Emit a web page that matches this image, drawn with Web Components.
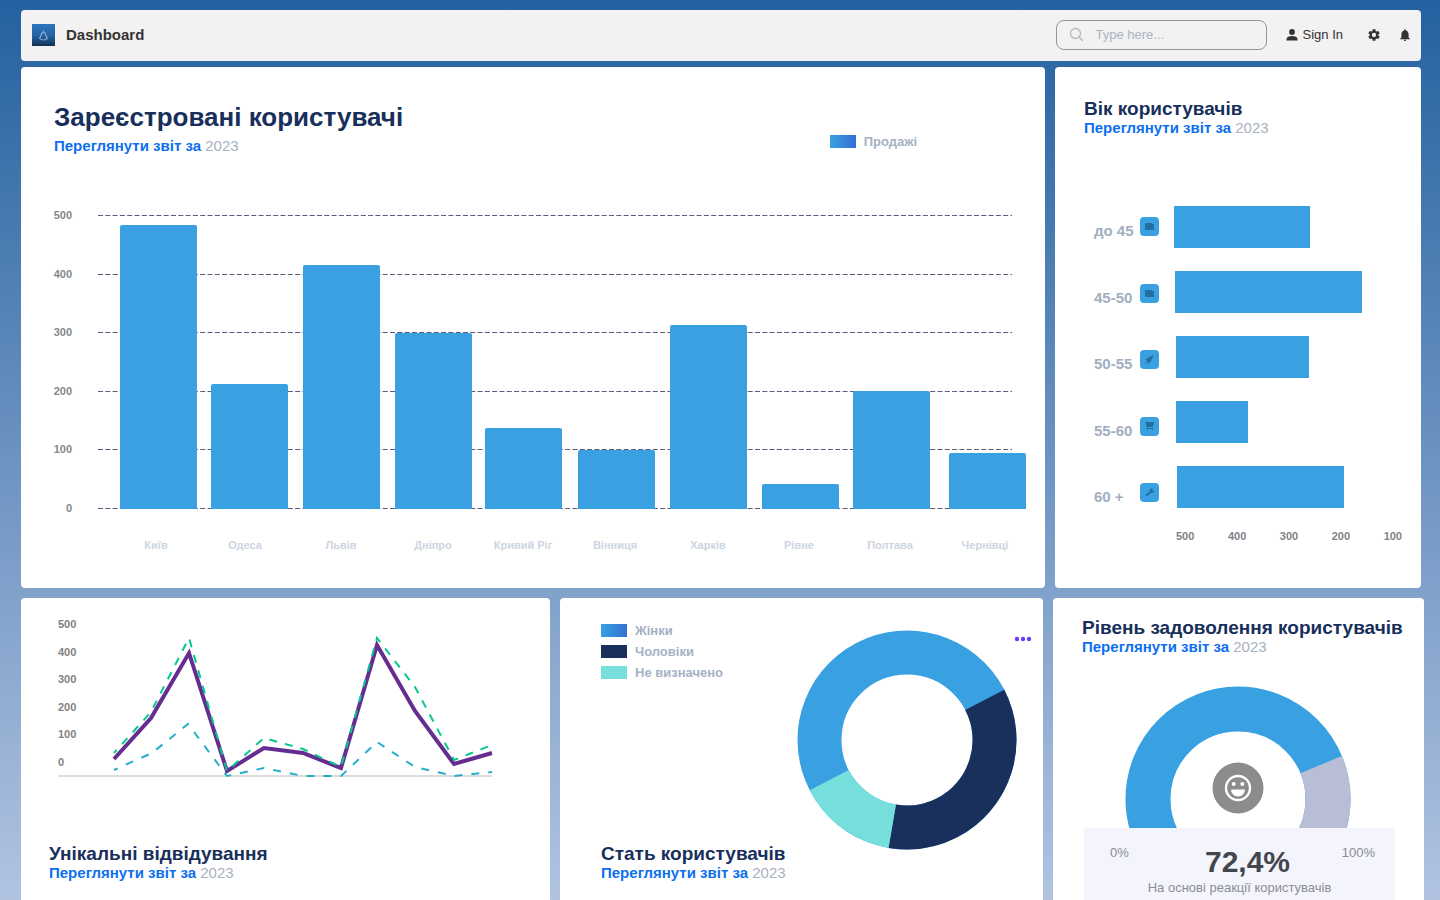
<!DOCTYPE html>
<html lang="uk">
<head>
<meta charset="utf-8">
<title>Dashboard</title>
<style>
  html { height: 100%; }
  body {
    margin: 0; min-height: 100%; display: flex; flex-direction: column;
    font-family: "Liberation Sans", Arial, sans-serif; color: #2d3748;
    background: linear-gradient(#2461a0, #b1c3e1) fixed;
  }
</style>
</head>
<body>
<dash-app></dash-app>

<script>
const define = (name, html, setup) => {
  const template = document.createElement('template');
  template.innerHTML = html;
  customElements.define(name, class extends HTMLElement {
    constructor() {
      super();
      this.attachShadow({ mode: 'open' }).append(template.content.cloneNode(true));
    }
    connectedCallback() { if (setup) setup(this.shadowRoot, this); }
  });
};

define('dash-header', `
<style>
  :host { display: flex; align-items: center; height: 51px; box-sizing: border-box; padding: 0 11px 2px; background: #f3f1f1; border-radius: 4px; color: #333; }
  .logo { width: 23px; height: 22px; margin-right: 11px; }
  h1 { margin: 0; font-size: 15px; line-height: 20px; flex: 1; }
  .search { display: flex; align-items: center; gap: 12px; box-sizing: border-box; width: 211px; height: 30px; padding: 0 12px; border: 1px solid #929896; border-radius: 8px; margin-right: 19px; }
  .search svg { flex: none; width: 15px; height: 15px; }
  input { min-width: 0; flex: 1; border: 0; padding: 0; outline: 0; background: none; font: 13px/20px "Liberation Sans", Arial, sans-serif; color: #333; }
  input::placeholder { color: #a9b6c8; opacity: 1; }
  a { display: flex; align-items: center; gap: 5px; color: inherit; font-size: 13px; line-height: 20px; text-decoration: none; margin-right: 25px; }
  button { border: 0; padding: 0; background: none; display: block; color: inherit; }
  button + button { margin-left: 20px; }
  button svg, a svg { display: block; }
</style>
<svg class="logo" viewBox="0 0 24 24" preserveAspectRatio="none" aria-hidden="true">
  <defs><linearGradient id="sky" x1="0" y1="0" x2="0" y2="1"><stop offset="0" stop-color="#2d76be"/><stop offset=".55" stop-color="#2461a0"/><stop offset="1" stop-color="#0f3050"/></linearGradient></defs>
  <path fill="url(#sky)" d="M0 0h24v24H0z"/>
  <path d="M12 7v2M10.500 9.500 8 16q4 3 8 0l-2.500-6.500z" fill="none" stroke="#8fb3d8" stroke-width="1.200"/>
</svg>
<h1>Dashboard</h1>
<label class="search">
  <svg viewBox="0 0 15 15" fill="none" stroke="#b5b9bc" stroke-width="1.300" stroke-linecap="round" aria-hidden="true"><circle cx="6.500" cy="6.500" r="5"/><path d="m10.300 10.300 3.200 3.200"/></svg>
  <input type="text" placeholder="Type here..." aria-label="Type here">
</label>
<a href="#sign-in"><svg width="12" height="12" viewBox="0 0 12 12" fill="currentColor" aria-hidden="true"><circle cx="6" cy="3" r="2.900"/><path d="M.500 11.500V10C.500 8 3 7 6 7s5.500 1 5.500 3v1.500z"/></svg>Sign In</a>
<button aria-label="Settings"><svg width="12" height="12" viewBox="2 2 20 20" fill="currentColor"><path d="M19.140 12.940a7 7 0 0 0 0-1.880l2.030-1.580a.5.5 0 0 0 .12-.61l-1.920-3.320a.5.5 0 0 0-.59-.22l-2.390.96a7 7 0 0 0-1.620-.94l-.36-2.540a.5.5 0 0 0-.48-.41h-3.840a.5.5 0 0 0-.47.410l-.36 2.540a7 7 0 0 0-1.620.940l-2.390-.96a.5.5 0 0 0-.59.220L2.740 8.870a.5.5 0 0 0 .12.610l2.030 1.580a7 7 0 0 0 0 1.880l-2.030 1.580a.5.5 0 0 0-.12.610l1.920 3.320c.12.220.37.290.59.220l2.390-.96a7 7 0 0 0 1.620.940l.36 2.540c.05.240.24.410.48.410h3.840c.24 0 .44-.17.470-.41l.36-2.540a7 7 0 0 0 1.620-.94l2.390.960c.22.080.47 0 .59-.22l1.920-3.320a.5.5 0 0 0-.12-.61zM12 15.600a3.600 3.600 0 1 1 0-7.200 3.600 3.600 0 0 1 0 7.200z"/></svg></button>
<button aria-label="Notifications"><svg width="10" height="12" viewBox="4 2 16 20" fill="currentColor"><path d="M12 22a2 2 0 0 0 2-2h-4a2 2 0 0 0 2 2zm6-6v-5c0-3.070-1.640-5.640-4.500-6.320V4a1.500 1.500 0 0 0-3 0v.680C7.630 5.360 6 7.920 6 11v5l-2 2v1h16v-1z"/></svg></button>
`);

define('dash-card', `
<style>
  :host { display: flex; flex-direction: column; box-sizing: border-box; min-width: 0; background: #fff; border-radius: 4px; }
</style>
<slot></slot>
`);

define('report-title', `
<style>
  :host { display: block; white-space: nowrap; }
  h2 { margin: 0; color: #182f5b; font-size: var(--title-size, 19px); line-height: var(--title-line, 20px); }
  p { margin: 0; font-size: 15px; line-height: 18px; color: #a8b2c1; }
  a { color: #0c6ff0; font-weight: bold; text-decoration: none; }
</style>
<h2><slot></slot></h2>
<p><a href="#report">Переглянути звіт за</a> 2023</p>
`);

define('legend-item', `
<style>
  :host { display: flex; align-items: center; gap: 8px; font-size: 13px; line-height: 21px; font-weight: bold; color: #a5b1c5; white-space: nowrap; }
  i { width: 26px; height: 13px; background: var(--swatch, linear-gradient(90deg, #38a1e1, #346fd2)); }
</style>
<i></i><slot></slot>
`);

define('city-chart', `
<style>
  :host { display: block; }
  svg { display: block; width: 100%; height: 350px; overflow: visible; font-size: 11px; font-weight: bold; }
  .tick { fill: #858789; text-anchor: end; }
  .city { fill: #ccd5e1; text-anchor: middle; }
  line { stroke: #5f5c7a; stroke-dasharray: 5 2.300; }
  rect { fill: #39a1e1; }
</style>
<svg role="img" aria-label="Зареєстровані користувачі"></svg>
`, root => {
  const span = 971, pc = v => (v / span * 100) + '%';
  const cities = [['Київ', 66, 284, 102], ['Одеса', 157, 125, 191], ['Львів', 249, 244, 287], ['Дніпро', 341, 176, 379], ['Кривий Ріг', 431, 81, 469], ['Вінниця', 524, 59, 561], ['Харків', 616, 184, 654], ['Рівне', 708, 25, 745], ['Полтава', 799, 118, 836], ['Чернівці', 895, 56, 931]];
  let out = '';
  [500, 400, 300, 200, 100, 0].forEach((t, i) => {
    const y = Math.round(10 + i * 58.6);
    out += `<text class="tick" x="18" y="${y + 4}">${t}</text><line x1="${pc(44)}" x2="${pc(958)}" y1="${y + .5}" y2="${y + .5}"/>`;
  });
  for (const [name, x, h, c] of cities)
    out += `<rect x="${pc(x)}" y="${304 - h}" width="${pc(77)}" height="${h}" rx="2"/><rect x="${pc(x)}" y="${304 - h + 4}" width="${pc(77)}" height="${h - 4}"/><text class="city" x="${pc(c)}" y="344">${name}</text>`;
  root.querySelector('svg').innerHTML = out;
});

define('age-chart', `
<style>
  :host { display: block; }
  .rows { display: flex; gap: 15px; height: 302px; }
  ul { list-style: none; margin: 0; padding: 0; display: flex; flex-direction: column; justify-content: space-between; }
  .names { width: 65px; padding: 11px 0 5px; flex: none; }
  .names li { display: flex; justify-content: space-between; height: 20px; font-size: 15px; line-height: 28px; font-weight: bold; color: #a2aec1; white-space: nowrap; }
  .names svg { width: 19px; height: 19px; }
  .bars { flex: 1; }
  .bars li { height: 42px; background: #39a1e1; }
  .axis { flex-direction: row; padding: 20px 0 0 82px; font-size: 11px; line-height: 16px; font-weight: bold; color: #808285; }
</style>
<div class="rows"><ul class="names"></ul><ul class="bars"></ul></div>
<ul class="axis"><li>500</li><li>400</li><li>300</li><li>200</li><li>100</li></ul>
`, root => {
  const wallet = '<path d="M5 6h7v1h2v6H5z"/>';
  const data = [
    ['до 45', 0, 136, wallet], ['45-50', 1, 187, wallet],
    ['50-55', 2, 133, '<path d="M14 5 9 7 5 10l2 1 1 3 3-3z"/><path d="m6 12-1 2 2-1z"/>'],
    ['55-60', 2, 72, '<path d="M5 5h9l-1 5H7l1 1h5v2h-1v-1H8v1H7l-1-6z"/>'],
    ['60 +', 3, 167, '<path d="m5 12 4-3 1-3 3-1-1 2 1 1 1-1v2l-3 1-4 3z"/>']];
  root.querySelector('.names').innerHTML = data.map(d => `<li>${d[0]}<svg viewBox="0 0 19 19" aria-hidden="true"><rect width="19" height="19" rx="4" fill="#39a1e1"/><g fill="#246f9f">${d[3]}</g></svg></li>`).join('');
  root.querySelector('.bars').innerHTML = data.map(d => `<li style="margin-left:${d[1]}px;width:${d[2] / 228 * 100}%"></li>`).join('');
});

define('visits-chart', `
<style>
  :host { display: flex; height: 160px; }
  ol { list-style: none; margin: 0; padding: 0; width: 19px; flex: none; font-size: 11px; font-weight: bold; color: #808285; line-height: 16px; display: flex; flex-direction: column; height: 154px; justify-content: space-between; }
  svg { display: block; margin-left: -19px; width: 100%; min-width: 0; height: 166px; overflow: visible; }
  polyline { fill: none; }
</style>
<ol><li>500</li><li>400</li><li>300</li><li>200</li><li>100</li><li>0</li></ol>
<svg viewBox="58 616 434 166" preserveAspectRatio="none" role="img" aria-label="Унікальні відвідування">
  <path d="M58 776h434" stroke="#cfd0d1" stroke-width="1.500"/>
  <polyline stroke="#662d91" stroke-width="4" points="114,759 151,718 189,653 227,771 264,748 303,753 341,768 377,645 415,711 454,764 492,753"/>
  <polyline stroke="#06c792" stroke-width="2" stroke-dasharray="8 8" stroke-dashoffset="4" points="114,753 151,712 189,638 227,771 264,738 303,749 341,767 377,638 415,687 454,760 492,745"/>
  <polyline stroke="#25aecb" stroke-width="2" stroke-dasharray="8 9" stroke-dashoffset="4" points="114,770 152,753 188,724 227,776 264,768 303,776 341,776 377,742 415,767 454,776 492,772"/>
</svg>
`);

define('gender-donut', `
<style>
  :host { display: block; }
  svg { display: block; width: 220px; height: 220px; }
</style>
<svg viewBox="-110 -110 220 220" fill="none" stroke-width="44" role="img" aria-label="Стать користувачів">
  <circle r="87.500" stroke="#39a1e1"/>
  <circle r="87.500" stroke="#18305b" pathLength="360" stroke-dasharray="127 233" transform="rotate(-27.300)"/>
  <circle r="87.500" stroke="#76dfdb" pathLength="360" stroke-dasharray="53 307" transform="rotate(99.700)"/>
</svg>
`);

define('mood-gauge', `
<style>
  :host { display: flex; flex-direction: column; flex: 1; }
  .dial { display: block; width: 226px; height: 142px; margin-left: 41px; }
  .panel { flex: 1; background: #f3f4fc; display: grid; grid-template-columns: 1fr auto 1fr; padding: 16px 20px 0 26px; color: #8c8d93; font-size: 13px; line-height: 18px; align-content: start; }
  strong { padding-left: 10px; font-size: 30px; line-height: 35px; color: #44464d; }
  .max { text-align: right; }
  .note { grid-column: 1 / -1; padding-right: 6px; text-align: center; }
</style>
<svg class="dial" viewBox="-113 -113 226 142" role="img" aria-label="72,4%">
  <g fill="none" stroke-width="45"><circle r="90" stroke="#39a1e1"/><circle r="90" stroke="#b7bed6" pathLength="360" stroke-dasharray="80 280" transform="rotate(-22.500)"/></g>
  <circle cy="-11" r="25.500" fill="#8c8c8c"/>
  <circle cy="-11" r="12" fill="none" stroke="#fff" stroke-width="2.400"/>
  <g fill="#fff"><circle cx="-4.300" cy="-15" r="2"/><circle cx="4.300" cy="-15" r="2"/><path d="M-7-9.500H7a7 7 0 0 1-14 0z"/></g>
</svg>
<div class="panel"><span>0%</span><strong>72,4%</strong><span class="max">100%</span><span class="note">На основі реакції користувачів</span></div>
`);

define('dash-app', `
<style>
  :host { flex: 1; display: flex; flex-direction: column; padding: 10px 16px 0 21px; }
  dash-header { margin-right: 3px; }
  .top { display: grid; grid-template-columns: 1024fr 366fr; gap: 10px; margin: 6px 3px 10px 0; }
  .bottom { flex: 1; display: grid; grid-template-columns: 529fr 483fr 371fr; gap: 10px; }
  .bottom dash-card { border-radius: 4px 4px 0 0; }
  .top dash-card { min-height: 521px; }
  .cities { padding: 30px 20px 0 33px; }
  .cities report-title { --title-size: 26px; --title-line: 40px; }
  .cities header { display: flex; justify-content: space-between; height: 108px; }
  .cities legend-item { align-self: flex-start; margin: 34px 108px 0 0; }
  .ages { padding: 32px 19px 0 29px; }
  .ages age-chart { margin: 69px 0 0 10px; }
  .visits { padding: 18px 58px 0 28px; justify-content: space-between; }
  .visits visits-chart { margin-left: 9px; }
  .visits report-title, .gender report-title { margin-bottom: 18px; }
  .gender { padding: 22px 11px 0 41px; justify-content: space-between; }
  .gender .chart { display: flex; align-items: flex-start; }
  .gender .legend { flex: 1; }
  .gender gender-donut { margin: 10px -3px 0 0; }
  .gender button { border: 0; padding: 0; background: none; margin-top: 16px; }
  .gender button svg { display: block; }
  .gender .base { height: 38px; margin-top: -8px; }
  .mood { padding: 20px 29px 0; }
  .mood report-title { margin-bottom: 30px; }
  .mood mood-gauge { margin-left: 2px; }
</style>
<dash-header></dash-header>
<div class="top">
  <dash-card class="cities">
    <header><report-title>Зареєстровані користувачі</report-title><legend-item>Продажі</legend-item></header>
    <city-chart></city-chart>
  </dash-card>
  <dash-card class="ages"><report-title>Вік користувачів</report-title><age-chart></age-chart></dash-card>
</div>
<div class="bottom">
  <dash-card class="visits"><visits-chart></visits-chart><report-title>Унікальні відвідування</report-title></dash-card>
  <dash-card class="gender">
    <div class="chart">
      <div class="legend">
        <legend-item>Жінки</legend-item>
        <legend-item style="--swatch:#18305b">Чоловіки</legend-item>
        <legend-item style="--swatch:#76dfdb">Не визначено</legend-item>
      </div>
      <gender-donut></gender-donut>
      <button aria-label="Menu"><svg width="18" height="6" viewBox="0 0 18 6" fill="#6a3df5"><circle cx="3" cy="3" r="2.200"/><circle cx="9" cy="3" r="2.200"/><circle cx="15" cy="3" r="2.200"/></svg></button>
    </div>
    <report-title class="base">Стать користувачів</report-title>
  </dash-card>
  <dash-card class="mood"><report-title>Рівень задоволення користувачів</report-title><mood-gauge></mood-gauge></dash-card>
</div>
`);
</script>
</body>
</html>
